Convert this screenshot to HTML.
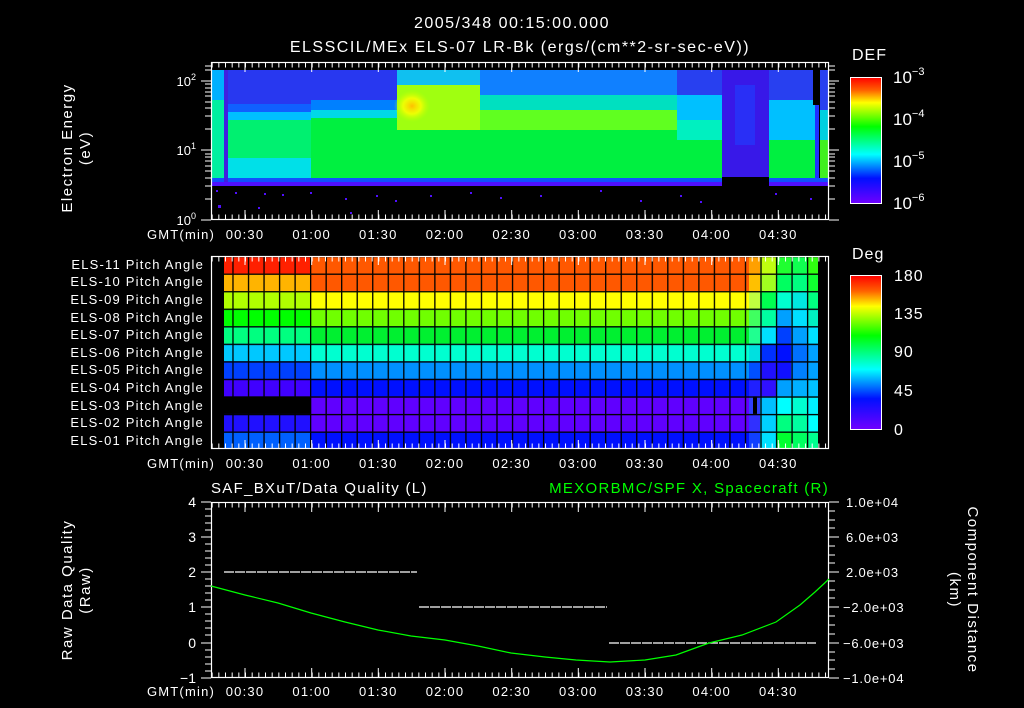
<!DOCTYPE html>
<html><head><meta charset="utf-8"><style>
html,body{margin:0;padding:0;background:#000;}
svg{display:block;}
text{font-family:"Liberation Sans",sans-serif;fill:#fff;}
</style></head><body>
<svg width="1024" height="708" viewBox="0 0 1024 708" xmlns="http://www.w3.org/2000/svg">
<defs>
<linearGradient id="cb" x1="0" y1="0" x2="0" y2="1">
<stop offset="0" stop-color="#ff0000"/><stop offset="0.1" stop-color="#ff6000"/><stop offset="0.2" stop-color="#ffff00"/><stop offset="0.39" stop-color="#00ff00"/><stop offset="0.61" stop-color="#00ffff"/><stop offset="0.8" stop-color="#0010ff"/><stop offset="1" stop-color="#7000ff"/>
</linearGradient>
<radialGradient id="yel" cx="0.5" cy="0.5" r="0.5">
<stop offset="0" stop-color="#ffc000"/><stop offset="0.5" stop-color="#ffff00" stop-opacity="0.8"/><stop offset="1" stop-color="#c0ff00" stop-opacity="0"/>
</radialGradient>
<pattern id="grid" patternUnits="userSpaceOnUse" x="216.8" y="256" width="15.53" height="17.55">
<rect x="0" y="0" width="1.3" height="17.55" fill="#000"/><rect x="0" y="0" width="15.53" height="1.3" fill="#000"/>
</pattern>
</defs>

<g letter-spacing="1.5">
<text x="512" y="28" text-anchor="middle" font-size="16">2005/348 00:15:00.000</text>
<text x="520" y="52" text-anchor="middle" font-size="16">ELSSCIL/MEx ELS-07 LR-Bk  (ergs/(cm**2-sr-sec-eV))</text>
</g>

<!-- Top spectrogram -->
<rect x="211" y="178" width="618" height="4" fill="#1050ff"/>
<rect x="211" y="182" width="618" height="4" fill="#5010ff"/>
<rect x="211" y="70" width="13" height="30" fill="#00b0ff"/>
<rect x="211" y="100" width="13" height="78" fill="#00f0a0"/>
<rect x="224" y="70" width="4" height="112" fill="#4020e0"/>
<rect x="228" y="70" width="83" height="42" fill="#2838f0"/>
<rect x="228" y="104" width="83" height="8" fill="#1060ff"/>
<rect x="228" y="112" width="83" height="8" fill="#00c0ff"/>
<rect x="228" y="120" width="83" height="38" fill="#00f070"/>
<rect x="228" y="158" width="83" height="20" fill="#00e0e8"/>
<rect x="311" y="70" width="86" height="30" fill="#2838f0"/>
<rect x="311" y="100" width="86" height="10" fill="#0080ff"/>
<rect x="311" y="110" width="86" height="8" fill="#00d8e8"/>
<rect x="311" y="118" width="86" height="60" fill="#00f040"/>
<rect x="397" y="70" width="83" height="15" fill="#10c0f0"/>
<rect x="397" y="85" width="83" height="45" fill="#a0ff10"/>
<rect x="397" y="130" width="83" height="48" fill="#00f040"/>
<rect x="480" y="70" width="197" height="25" fill="#1080ff"/>
<rect x="480" y="95" width="197" height="15" fill="#00e0c0"/>
<rect x="480" y="110" width="197" height="20" fill="#60ff20"/>
<rect x="480" y="130" width="197" height="48" fill="#00f040"/>
<ellipse cx="412" cy="106" rx="18" ry="16" fill="url(#yel)"/>
<g>
<rect x="677" y="70" width="45" height="25" fill="#2840f0"/><rect x="677" y="95" width="45" height="25" fill="#00c0ff"/><rect x="677" y="120" width="45" height="20" fill="#00f0c0"/><rect x="677" y="140" width="45" height="38" fill="#00f040"/>
<rect x="769" y="70" width="46" height="30" fill="#2840f0"/><rect x="769" y="100" width="46" height="40" fill="#00c0ff"/><rect x="769" y="140" width="46" height="38" fill="#00f040"/>
<rect x="820" y="70" width="8" height="40" fill="#2840f0"/><rect x="820" y="110" width="8" height="30" fill="#00d0e0"/><rect x="820" y="140" width="8" height="38" fill="#40f020"/>
</g>
<rect x="722" y="70" width="47" height="108" fill="#3818e8"/>
<rect x="735" y="85" width="20" height="60" fill="#2040ff" opacity="0.6"/>
<rect x="722" y="177" width="47" height="11" fill="#000"/>
<rect x="813" y="70" width="5" height="35" fill="#000"/>
<rect x="815" y="105" width="4" height="73" fill="#2030ff"/>
<rect x="211" y="186" width="618" height="34" fill="#000"/>
<g fill="#5010ff">
<rect x="216" y="190" width="2" height="2"/><rect x="235" y="192" width="2" height="2"/><rect x="264" y="193" width="2" height="2"/><rect x="282" y="194" width="2" height="2"/><rect x="310" y="192" width="2" height="2"/><rect x="345" y="198" width="2" height="2"/><rect x="376" y="195" width="2" height="2"/><rect x="395" y="200" width="2" height="2"/><rect x="430" y="195" width="2" height="2"/><rect x="470" y="192" width="2" height="2"/><rect x="500" y="197" width="2" height="2"/><rect x="540" y="195" width="2" height="2"/><rect x="600" y="190" width="2" height="2"/><rect x="640" y="200" width="2" height="2"/><rect x="680" y="195" width="2" height="2"/><rect x="700" y="201" width="2" height="2"/><rect x="775" y="193" width="2" height="2"/><rect x="810" y="198" width="2" height="2"/><rect x="218" y="205" width="3" height="3"/><rect x="350" y="212" width="2" height="2"/><rect x="258" y="207" width="2" height="2"/>
</g>
<rect x="211.5" y="62.5" width="617" height="157" fill="none" stroke="#fff" stroke-width="1.2"/>
<line x1="211.67" y1="65" x2="829" y2="65" stroke="#fff" stroke-width="5" stroke-dasharray="1 5.667"/>
<line x1="211.67" y1="217" x2="829" y2="217" stroke="#fff" stroke-width="5" stroke-dasharray="1 5.667"/>
<g stroke="#fff" stroke-width="1">
<path d="M245 62v10M311.7 62v10M378.3 62v10M445 62v10M511.7 62v10M578.3 62v10M645 62v10M711.7 62v10M778.3 62v10"/>
<path d="M245 220v-10M311.7 220v-10M378.3 220v-10M445 220v-10M511.7 220v-10M578.3 220v-10M645 220v-10M711.7 220v-10M778.3 220v-10"/>
<path d="M201 220h10M205 199h6M205 186h6M205 178h6M205 171h6M205 166h6M205 161h6M205 157h6M205 154h6M201 150h10M205 129h6M205 116h6M205 108h6M205 102h6M205 96h6M205 92h6M205 88h6M205 84h6M201 81h10M205 70h6M205 66h6"/>
<path d="M839 220h-10M835 199h-6M835 186h-6M835 178h-6M835 171h-6M835 166h-6M835 161h-6M835 157h-6M835 154h-6M839 150h-10M835 129h-6M835 116h-6M835 108h-6M835 102h-6M835 96h-6M835 92h-6M835 88h-6M835 84h-6M839 81h-10M835 70h-6M835 66h-6"/>
</g>
<g font-size="13" text-anchor="end">
<text x="196" y="86">10<tspan font-size="9" dy="-6">2</tspan></text>
<text x="196" y="155">10<tspan font-size="9" dy="-6">1</tspan></text>
<text x="196" y="225">10<tspan font-size="9" dy="-6">0</tspan></text>
</g>
<g letter-spacing="1.5">
<text transform="translate(72,148) rotate(-90)" text-anchor="middle" font-size="15">Electron Energy</text>
<text transform="translate(90,148) rotate(-90)" text-anchor="middle" font-size="15">(eV)</text>
</g>
<g font-size="13" text-anchor="middle" letter-spacing="1.2">
<text x="181" y="239">GMT(min)</text>
<text x="245" y="239">00:30</text><text x="311.7" y="239">01:00</text><text x="378.3" y="239">01:30</text><text x="445" y="239">02:00</text><text x="511.7" y="239">02:30</text><text x="578.3" y="239">03:00</text><text x="645" y="239">03:30</text><text x="711.7" y="239">04:00</text><text x="778.3" y="239">04:30</text>
</g>
<text x="852" y="60" font-size="16" letter-spacing="1">DEF</text>
<rect x="850.5" y="77.5" width="31" height="126" fill="url(#cb)" stroke="#fff" stroke-width="1"/>
<g font-size="17">
<text x="893" y="83">10<tspan font-size="11" dy="-8">−3</tspan></text>
<text x="893" y="125">10<tspan font-size="11" dy="-8">−4</tspan></text>
<text x="893" y="167">10<tspan font-size="11" dy="-8">−5</tspan></text>
<text x="893" y="209">10<tspan font-size="11" dy="-8">−6</tspan></text>
</g>

<!-- Pitch angle panel -->
<rect x="211" y="256" width="618" height="193" fill="#000"/>
<g>
<rect x="224" y="256" width="87" height="17.55" fill="#ff2000"/><rect x="311" y="256" width="438" height="17.55" fill="#ff5800"/><rect x="749" y="256" width="11" height="17.55" fill="#ffa000"/><rect x="760" y="256" width="16" height="17.55" fill="#c0ff10"/><rect x="776" y="256" width="15" height="17.55" fill="#20ff30"/><rect x="791" y="256" width="16" height="17.55" fill="#10ff50"/><rect x="807" y="256" width="11" height="17.55" fill="#30ff10"/>
<rect x="224" y="273.55" width="87" height="17.55" fill="#ffb400"/><rect x="311" y="273.55" width="438" height="17.55" fill="#ff5800"/><rect x="749" y="273.55" width="11" height="17.55" fill="#ffc000"/><rect x="760" y="273.55" width="16" height="17.55" fill="#a0ff20"/><rect x="776" y="273.55" width="15" height="17.55" fill="#00ff60"/><rect x="791" y="273.55" width="16" height="17.55" fill="#00ff80"/><rect x="807" y="273.55" width="11" height="17.55" fill="#10ff30"/>
<rect x="224" y="291.1" width="87" height="17.55" fill="#b0ff00"/><rect x="311" y="291.1" width="438" height="17.55" fill="#ffff00"/><rect x="749" y="291.1" width="11" height="17.55" fill="#c0ff40"/><rect x="760" y="291.1" width="16" height="17.55" fill="#00ff50"/><rect x="776" y="291.1" width="15" height="17.55" fill="#00ffd0"/><rect x="791" y="291.1" width="16" height="17.55" fill="#00e8e0"/><rect x="807" y="291.1" width="11" height="17.55" fill="#00ff80"/>
<rect x="224" y="308.65" width="87" height="17.55" fill="#00ff00"/><rect x="311" y="308.65" width="438" height="17.55" fill="#70ff00"/><rect x="749" y="308.65" width="11" height="17.55" fill="#40ff60"/><rect x="760" y="308.65" width="16" height="17.55" fill="#00ffa0"/><rect x="776" y="308.65" width="15" height="17.55" fill="#00a0ff"/><rect x="791" y="308.65" width="16" height="17.55" fill="#00e0ff"/><rect x="807" y="308.65" width="11" height="17.55" fill="#00f0c0"/>
<rect x="224" y="326.2" width="87" height="17.55" fill="#00ff80"/><rect x="311" y="326.2" width="438" height="17.55" fill="#00f030"/><rect x="749" y="326.2" width="11" height="17.55" fill="#20ff90"/><rect x="760" y="326.2" width="16" height="17.55" fill="#00e0ff"/><rect x="776" y="326.2" width="15" height="17.55" fill="#0040ff"/><rect x="791" y="326.2" width="16" height="17.55" fill="#00a0ff"/><rect x="807" y="326.2" width="11" height="17.55" fill="#00e0ff"/>
<rect x="224" y="343.75" width="87" height="17.55" fill="#00c8ff"/><rect x="311" y="343.75" width="438" height="17.55" fill="#00ffd0"/><rect x="749" y="343.75" width="11" height="17.55" fill="#00e0e0"/><rect x="760" y="343.75" width="16" height="17.55" fill="#0030ff"/><rect x="776" y="343.75" width="15" height="17.55" fill="#0010ff"/><rect x="791" y="343.75" width="16" height="17.55" fill="#0070ff"/><rect x="807" y="343.75" width="11" height="17.55" fill="#00a0ff"/>
<rect x="224" y="361.3" width="87" height="17.55" fill="#0040ff"/><rect x="311" y="361.3" width="438" height="17.55" fill="#0090ff"/><rect x="749" y="361.3" width="11" height="17.55" fill="#0050ff"/><rect x="760" y="361.3" width="16" height="17.55" fill="#2010ff"/><rect x="776" y="361.3" width="15" height="17.55" fill="#1010ff"/><rect x="791" y="361.3" width="16" height="17.55" fill="#0080ff"/><rect x="807" y="361.3" width="11" height="17.55" fill="#00a0ff"/>
<rect x="224" y="378.85" width="87" height="17.55" fill="#4000ff"/><rect x="311" y="378.85" width="438" height="17.55" fill="#0010ff"/><rect x="749" y="378.85" width="11" height="17.55" fill="#2020ff"/><rect x="760" y="378.85" width="16" height="17.55" fill="#3010ff"/><rect x="776" y="378.85" width="15" height="17.55" fill="#00a0ff"/><rect x="791" y="378.85" width="16" height="17.55" fill="#00b0ff"/><rect x="807" y="378.85" width="11" height="17.55" fill="#00c0ff"/>
<rect x="311" y="396.4" width="438" height="17.55" fill="#6000ff"/><rect x="749" y="396.4" width="11" height="17.55" fill="#3040ff"/><rect x="753" y="396.4" width="4" height="17.55" fill="#000"/><rect x="760" y="396.4" width="16" height="17.55" fill="#00c0ff"/><rect x="776" y="396.4" width="15" height="17.55" fill="#00ffff"/><rect x="791" y="396.4" width="16" height="17.55" fill="#00ffd0"/><rect x="807" y="396.4" width="11" height="17.55" fill="#00f0ff"/>
<rect x="224" y="413.95" width="87" height="17.55" fill="#2010ff"/><rect x="311" y="413.95" width="438" height="17.55" fill="#6000ff"/><rect x="749" y="413.95" width="11" height="17.55" fill="#3030ff"/><rect x="760" y="413.95" width="16" height="17.55" fill="#00d0ff"/><rect x="776" y="413.95" width="15" height="17.55" fill="#00ff80"/><rect x="791" y="413.95" width="16" height="17.55" fill="#00ffa0"/><rect x="807" y="413.95" width="11" height="17.55" fill="#00ffff"/>
<rect x="224" y="431.5" width="87" height="17.5" fill="#0060ff"/><rect x="311" y="431.5" width="438" height="17.5" fill="#0010ff"/><rect x="749" y="431.5" width="11" height="17.5" fill="#1040ff"/><rect x="760" y="431.5" width="16" height="17.5" fill="#00e0ff"/><rect x="776" y="431.5" width="15" height="17.5" fill="#00ff30"/><rect x="791" y="431.5" width="16" height="17.5" fill="#00ff60"/><rect x="807" y="431.5" width="11" height="17.5" fill="#00ff90"/>
</g>
<rect x="224" y="256" width="594" height="193" fill="url(#grid)"/>
<rect x="211.5" y="256.5" width="617" height="192" fill="none" stroke="#fff" stroke-width="1.2"/>
<line x1="211.67" y1="259" x2="829" y2="259" stroke="#fff" stroke-width="5" stroke-dasharray="1 5.667"/>
<line x1="211.67" y1="446" x2="829" y2="446" stroke="#fff" stroke-width="5" stroke-dasharray="1 5.667"/>
<g stroke="#fff" stroke-width="1">
<path d="M245 256v9M311.7 256v9M378.3 256v9M445 256v9M511.7 256v9M578.3 256v9M645 256v9M711.7 256v9M778.3 256v9"/>
<path d="M245 449v-9M311.7 449v-9M378.3 449v-9M445 449v-9M511.7 449v-9M578.3 449v-9M645 449v-9M711.7 449v-9M778.3 449v-9"/>
</g>
<g font-size="13" text-anchor="end" letter-spacing="1.2">
<text x="204" y="269">ELS-11 Pitch Angle</text>
<text x="204" y="286">ELS-10 Pitch Angle</text>
<text x="204" y="304">ELS-09 Pitch Angle</text>
<text x="204" y="322">ELS-08 Pitch Angle</text>
<text x="204" y="339">ELS-07 Pitch Angle</text>
<text x="204" y="357">ELS-06 Pitch Angle</text>
<text x="204" y="374">ELS-05 Pitch Angle</text>
<text x="204" y="392">ELS-04 Pitch Angle</text>
<text x="204" y="410">ELS-03 Pitch Angle</text>
<text x="204" y="427">ELS-02 Pitch Angle</text>
<text x="204" y="445">ELS-01 Pitch Angle</text>
</g>
<g font-size="13" text-anchor="middle" letter-spacing="1.2">
<text x="181" y="468">GMT(min)</text>
<text x="245" y="468">00:30</text><text x="311.7" y="468">01:00</text><text x="378.3" y="468">01:30</text><text x="445" y="468">02:00</text><text x="511.7" y="468">02:30</text><text x="578.3" y="468">03:00</text><text x="645" y="468">03:30</text><text x="711.7" y="468">04:00</text><text x="778.3" y="468">04:30</text>
</g>
<text x="852" y="259" font-size="16" letter-spacing="1">Deg</text>
<rect x="850.5" y="275.5" width="31" height="154" fill="url(#cb)" stroke="#fff" stroke-width="1"/>
<g font-size="16" letter-spacing="1">
<text x="894" y="281">180</text><text x="894" y="319">135</text><text x="894" y="357">90</text><text x="894" y="396">45</text><text x="894" y="435">0</text>
</g>

<!-- Bottom panel -->
<g letter-spacing="1.3">
<text x="211" y="493" font-size="15">SAF_BXuT/Data Quality (L)</text>
<text x="829" y="493" font-size="15" text-anchor="end" style="fill:#00ff00">MEXORBMC/SPF X, Spacecraft (R)</text>
</g>
<rect x="211.5" y="502.5" width="617" height="175" fill="none" stroke="#fff" stroke-width="1.2"/>
<line x1="211.67" y1="505" x2="829" y2="505" stroke="#fff" stroke-width="5" stroke-dasharray="1 5.667"/>
<line x1="211.67" y1="675" x2="829" y2="675" stroke="#fff" stroke-width="5" stroke-dasharray="1 5.667"/>
<g stroke="#fff" stroke-width="1">
<path d="M245 502v10M311.7 502v10M378.3 502v10M445 502v10M511.7 502v10M578.3 502v10M645 502v10M711.7 502v10M778.3 502v10"/>
<path d="M245 678v-10M311.7 678v-10M378.3 678v-10M445 678v-10M511.7 678v-10M578.3 678v-10M645 678v-10M711.7 678v-10M778.3 678v-10"/>
<path d="M201 502h10M201 537h10M201 572h10M201 607h10M201 643h10M201 678h10"/>
<path d="M205 509h6M205 516h6M205 523h6M205 530h6M205 544h6M205 551h6M205 558h6M205 565h6M205 579h6M205 586h6M205 593h6M205 600h6M205 614h6M205 621h6M205 628h6M205 635h6M205 650h6M205 657h6M205 664h6M205 671h6"/>
<path d="M839 502h-10M839 537h-10M839 572h-10M839 607h-10M839 643h-10M839 678h-10"/>
<path d="M835 511h-6M835 520h-6M835 528h-6M835 546h-6M835 555h-6M835 563h-6M835 581h-6M835 590h-6M835 598h-6M835 616h-6M835 625h-6M835 634h-6M835 652h-6M835 660h-6M835 669h-6"/>
</g>
<g stroke="#fff" stroke-width="1.2" stroke-dasharray="10 1">
<line x1="224" y1="572" x2="417" y2="572"/>
<line x1="419" y1="607" x2="607" y2="607"/>
<line x1="609" y1="643" x2="816" y2="643"/>
</g>
<path d="M211 586 L245 595 L278 603 L311 613 L345 622 L378 630 L411 636 L445 640 L478 646 L511 653 L545 657 L576 660 L610 662 L645 660 L676 655 L709 643 L742 635 L776 622 L800 605 L815 592 L829 579" fill="none" stroke="#00ff00" stroke-width="1.2"/>
<g font-size="14" text-anchor="end">
<text x="196" y="507">4</text><text x="196" y="542">3</text><text x="196" y="577">2</text><text x="196" y="612">1</text><text x="196" y="648">0</text><text x="196" y="683">−1</text>
</g>
<g font-size="13" letter-spacing="0.8">
<text x="846" y="507">1.0e+04</text><text x="846" y="542">6.0e+03</text><text x="846" y="577">2.0e+03</text><text x="843" y="612">−2.0e+03</text><text x="843" y="648">−6.0e+03</text><text x="843" y="683">−1.0e+04</text>
</g>
<g letter-spacing="1.5">
<text transform="translate(72,590) rotate(-90)" text-anchor="middle" font-size="15">Raw Data Quality</text>
<text transform="translate(90,590) rotate(-90)" text-anchor="middle" font-size="15">(Raw)</text>
<text transform="translate(968,590) rotate(90)" text-anchor="middle" font-size="15">Component Distance</text>
<text transform="translate(950,590) rotate(90)" text-anchor="middle" font-size="15">(km)</text>
</g>
<g font-size="13" text-anchor="middle" letter-spacing="1.2">
<text x="181" y="696">GMT(min)</text>
<text x="245" y="696">00:30</text><text x="311.7" y="696">01:00</text><text x="378.3" y="696">01:30</text><text x="445" y="696">02:00</text><text x="511.7" y="696">02:30</text><text x="578.3" y="696">03:00</text><text x="645" y="696">03:30</text><text x="711.7" y="696">04:00</text><text x="778.3" y="696">04:30</text>
</g>
</svg>
</body></html>
